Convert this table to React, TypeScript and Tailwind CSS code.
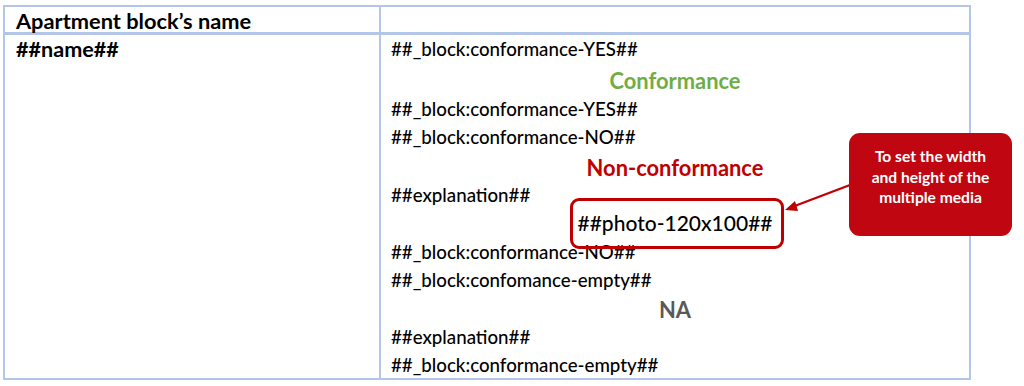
import React from "react";

const font = { fontFamily: "Lato, 'Open Sans', sans-serif" };

function Line({ children, className = "" }: { children: React.ReactNode; className?: string }) {
  return <div className={`h-[28px] leading-[28px] whitespace-nowrap ${className}`}>{children}</div>;
}

export default function App() {
  return (
    <div className="w-[1024px] h-[386px] bg-white relative overflow-hidden text-black" style={font}>
      <div className="ml-[3px] mt-[5px] w-[968px] border-2 border-[#b4c6e7]">
        <div className="flex h-[28px] border-b-[3px] border-[#b4c6e7]">
          <div className="w-[376px] border-r-2 border-[#b4c6e7] pl-[11px] text-[21.8px] font-bold leading-[28px]">
            Apartment block’s name
          </div>
          <div className="flex-1" />
        </div>
        <div className="flex h-[343px]">
          <div className="w-[376px] border-r-2 border-[#b4c6e7] pl-[11px] text-[21.6px] font-bold">
            <Line>##name##</Line>
          </div>
          <div className="flex-1 pl-[10px] text-[18.7px] font-medium">
            <Line>##_block:conformance-YES##</Line>
            <Line className="mt-[4px] text-center font-bold text-[21.9px] text-[#70ad47] pr-[10px]">Conformance</Line>
            <Line>##_block:conformance-YES##</Line>
            <Line>##_block:conformance-NO##</Line>
            <Line className="mt-[3px] text-center font-bold text-[21.9px] text-[#c00000] pr-[10px]">Non-conformance</Line>
            <Line className="-mt-[1px]">##explanation##</Line>
            <div className="h-[28px] leading-[28px] flex justify-center pr-[10px] text-[21px]">
              <div className="relative h-[28px]">
                <span>##photo-120x100##</span>
                <div className="absolute -left-[8px] -right-[11px] -top-[11px] -bottom-[12px] border-[3px] border-[#c00000] rounded-[9px]" />
              </div>
            </div>
            <Line className="mt-[1px]">##_block:conformance-NO##</Line>
            <Line>##_block:confomance-empty##</Line>
            <Line className="mt-[2px] text-center font-bold text-[21.9px] text-[#595959] pr-[10px]">NA</Line>
            <Line className="-mt-[1px]">##explanation##</Line>
            <Line>##_block:conformance-empty##</Line>
          </div>
        </div>
      </div>

      <svg className="absolute left-0 top-0" width="1024" height="386">
        <line x1="850" y1="185" x2="792" y2="207" stroke="#c00000" strokeWidth="2.4" />
        <polygon points="785,210 795,201 798,211" fill="#c00000" />
      </svg>

      <div className="absolute left-[849px] top-[133px] w-[163px] h-[103px] bg-[#c00711] rounded-[11px] pt-[13px] text-center text-white font-bold text-[15.6px] leading-[20.5px]">
        To set the width
        <br />
        and height of the
        <br />
        multiple media
      </div>
    </div>
  );
}
